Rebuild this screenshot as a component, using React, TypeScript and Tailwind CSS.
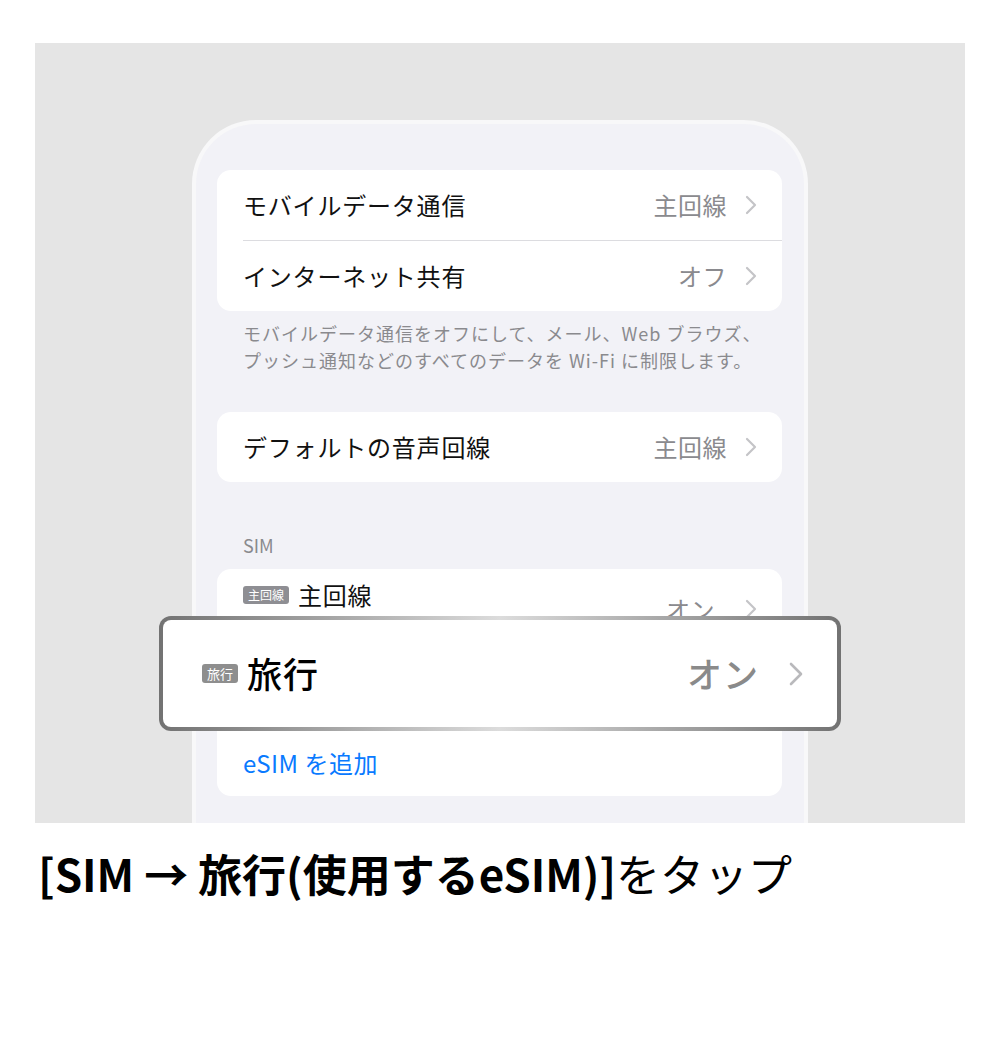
const jp = { fontFamily: '"Noto Sans CJK JP", "Noto Sans", sans-serif' };

function Chevron({ big = false }: { big?: boolean }) {
  return big ? (
    <svg width="14" height="24" viewBox="0 0 14 24" className="shrink-0">
      <polyline points="2,2 12,12 2,22" fill="none" stroke="#b9b9bc" strokeWidth="2.6" strokeLinecap="round" strokeLinejoin="round" />
    </svg>
  ) : (
    <svg width="12" height="20" viewBox="0 0 12 20" className="shrink-0">
      <polyline points="2,2 10,10 2,18" fill="none" stroke="#c4c4c7" strokeWidth="2.2" strokeLinecap="round" strokeLinejoin="round" />
    </svg>
  );
}

function Row({ label, value }: { label: string; value: string }) {
  return (
    <div className="h-[70px] flex items-center justify-between pr-[25px]">
      <span className="text-[24px] tracking-[0.8px] text-[#111]">{label}</span>
      <div className="flex items-center gap-[18px]">
        <span className="text-[24px] tracking-[0.5px] text-[#8a8a8e]">{value}</span>
        <Chevron />
      </div>
    </div>
  );
}

export default function App() {
  return (
    <div className="relative w-[1000px] h-[1051px] bg-white overflow-hidden" style={jp}>
      <div className="ml-[35px] mt-[43px] w-[930px] h-[780px] bg-[#e5e5e5] flex justify-center pt-[77px] overflow-hidden">
        <div className="w-[616px] h-[720px] rounded-t-[64px] border-4 border-b-0 border-[#f8f8f9] bg-[#f2f2f7] pl-[21px] pr-[22px] pt-[46px]">
          {/* mobile data card */}
          <div className="bg-white rounded-[14px] pl-[26px]">
            <Row label="モバイルデータ通信" value="主回線" />
            <div className="h-px bg-[#dcdce0]" />
            <Row label="インターネット共有" value="オフ" />
          </div>
          <p className="pl-[26px] pt-[9px] text-[18px] leading-[27px] tracking-[1px] text-[#8a8a8e] whitespace-nowrap">
            モバイルデータ通信をオフにして、メール、Web ブラウズ、
            <br />
            プッシュ通知などのすべてのデータを Wi-Fi に制限します。
          </p>

          <div className="mt-[38px] bg-white rounded-[14px] pl-[26px]">
            <Row label="デフォルトの音声回線" value="主回線" />
          </div>

          <div className="mt-[50px] mb-[10px] pl-[26px] text-[18px] leading-[27px] text-[#8a8a8e]">SIM</div>

          {/* SIM card */}
          <div className="bg-white rounded-[14px] pl-[26px]">
            <div className="h-[80px] flex justify-between pr-[25px]">
              <div className="flex items-center gap-[9px] self-start pt-[11px]">
                <span className="h-[18px] px-[5px] rounded-[3px] bg-[#8e8e93] text-white text-[12px] leading-[18px]">主回線</span>
                <span className="text-[24px] leading-[30px] tracking-[0.8px] text-[#111]">主回線</span>
              </div>
              <div className="flex items-center gap-[30px]">
                <span className="text-[24px] tracking-[0.5px] text-[#8a8a8e]">オン</span>
                <Chevron />
              </div>
            </div>
            <div className="h-px bg-[#dcdce0]" />
            <div className="h-[79px]" />
            <div className="h-px bg-[#dcdce0]" />
            <div className="h-[66px] flex items-center">
              <span className="text-[24px] tracking-[0.5px] text-[#0a7aff]">eSIM を追加</span>
            </div>
          </div>
        </div>
      </div>

      {/* highlighted row */}
      <div className="absolute left-[159px] top-[616px] w-[682px] h-[115px] rounded-[12px] p-[4px] bg-[linear-gradient(90deg,#727272_0%,#a5a5a5_25%,#dcdcdc_50%,#a5a5a5_75%,#727272_100%)]">
        <div className="w-full h-full rounded-[8px] bg-white flex items-center justify-between pl-[39px] pr-[34px]">
          <div className="flex items-center gap-[9px]">
            <span className="h-[19px] px-[5px] rounded-[3px] bg-[#8e8e8e] text-white text-[13px] leading-[19px]">旅行</span>
            <span className="text-[35px] font-medium tracking-[1px] text-black">旅行</span>
          </div>
          <div className="flex items-center gap-[30px]">
            <span className="text-[35px] font-medium tracking-[1px] text-[#8a8a8a]">オン</span>
            <Chevron big />
          </div>
        </div>
      </div>

      <div className="pl-[38px] mt-[24px] text-[44px] leading-[53px] text-black whitespace-nowrap">
        <span className="font-bold">[SIM → 旅行(使用するeSIM)]</span>
        <span>をタップ</span>
      </div>
    </div>
  );
}
